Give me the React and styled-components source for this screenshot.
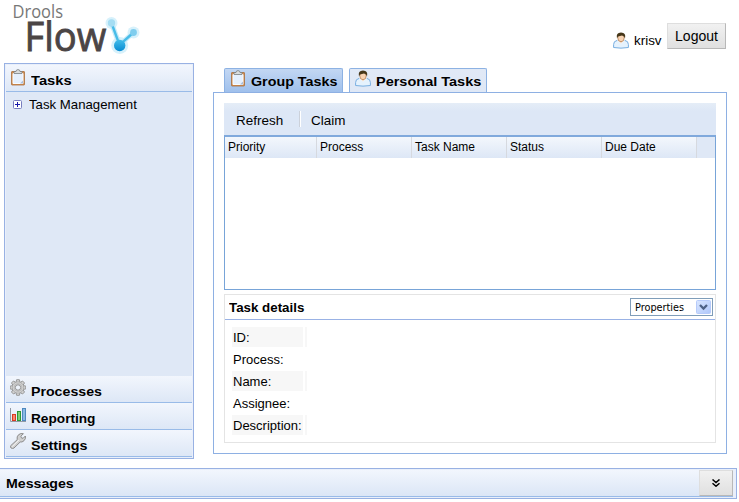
import React from "react";
import styled, { createGlobalStyle } from "styled-components";

const Global = createGlobalStyle`
  * { box-sizing: border-box; }
  body { margin: 0; background: #fff; color: #000; font-family: "Liberation Sans", Arial, sans-serif; overflow: hidden; }
`;

const Page = styled.div`
  width: 739px;
  height: 502px;
  display: flex;
  flex-direction: column;
`;

const Header = styled.header`
  height: 63px;
  flex: none;
  display: flex;
  justify-content: space-between;
  padding-right: 13px;
`;

const UserArea = styled.div`
  display: flex;
  align-items: flex-start;
  padding-top: 23px;
  svg { margin: 9px 5px 0 0; }
`;

const Label = styled.span`
  display: inline-block;
  white-space: nowrap;
  transform-origin: 0 50%;
  font-size: ${(p) => p.$size || 13}px;
  font-weight: ${(p) => (p.$bold ? 700 : 400)};
  transform: scaleX(${(p) => p.$stretch || 1});
  line-height: 16px;
`;

const UserName = styled(Label)`
  margin: 10px 6px 0 0;
`;

const Raised = styled.button`
  padding: 0;
  color: #000;
  font-family: inherit;
  border: 1px solid;
  border-color: #dedede #b8b8b8 #b8b8b8 #dedede;
  background: linear-gradient(#f1f1f1, #e0e0e0);
  width: ${(p) => p.$w}px;
  height: 26px;
  display: flex;
  align-items: center;
  justify-content: center;
`;

const Body = styled.main`
  height: 396px;
  flex: none;
  display: flex;
  align-items: flex-start;
  padding-left: 4px;
`;

const Sidebar = styled.nav`
  width: 190px;
  height: 396px;
  flex: none;
  border: 1px solid #98b1e3;
  padding: 1px;
  background: #dfe8f6;
  box-shadow: inset 0 0 0 1px #e9effa;
  display: flex;
  flex-direction: column;
`;

const StackHeader = styled.div`
  height: 27px;
  flex: none;
  display: flex;
  align-items: flex-start;
  background: linear-gradient(#f2f6fd, #dde7f6);
  border-bottom: 1px solid #99bbe8;
  padding-left: 4px;
  svg { margin: ${(p) => p.$iconTop ?? 4}px 5px 0 0; flex: none; }
  ${Label} { margin-top: 8px; }
`;

const Tree = styled.div`
  flex: 1;
  padding: 5px 0 0 6px;
  display: flex;
  align-items: flex-start;
  svg { margin: 2px 6px 0 0; }
`;

const Content = styled.section`
  width: 514px;
  margin: 5px 0 0 19px;
  display: flex;
  flex-direction: column;
`;

const Tabs = styled.div`
  display: flex;
  gap: 6px;
  height: 24px;
  padding-left: 11px;
`;

const Tab = styled.div`
  width: ${(p) => p.$w}px;
  height: 24px;
  border: 1px solid #8db2e3;
  border-bottom: 0;
  border-radius: 2px 2px 0 0;
  background: ${(p) => (p.$active ? "linear-gradient(#c3d7f3, #9fc0ec)" : "linear-gradient(#e1e9f6, #dfe8f6)")};
  display: flex;
  padding-left: 5px;
  svg { margin: 1px 5px 0 0; flex: none; }
  ${Label} { margin-top: 5px; }
`;

const Panel = styled.div`
  height: 362px;
  border: 1px solid #8eb0e3;
  padding: 10px;
  display: flex;
  flex-direction: column;
`;

const Toolbar = styled.div`
  height: 32px;
  flex: none;
  background: linear-gradient(#e5edf7, #dde7f6 8px);
  display: flex;
  align-items: flex-start;
  padding: 10px 0 0 12px;
`;

const Separator = styled.i`
  width: 2px;
  height: 16px;
  margin: -2px 10px 0 17px;
  border-left: 1px solid #ccd1da;
  border-right: 1px solid #fff;
`;

const Table = styled.div`
  height: 155px;
  flex: none;
  border: 1px solid #78a4d8;
  border-top: 2px solid #80a9dc;
`;

const Columns = styled.div`
  display: grid;
  grid-template-columns: 92px 95px 95px 95px 95px 1fr;
  height: 21px;
  background: #dfe8f6;
`;

const Column = styled.div`
  padding: 2px 0 0 3px;
  background: linear-gradient(#f3f7fc, #dde7f6);
  border-right: 1px solid #d6d9df;
  ${Label} { display: block; }
`;

const Details = styled.div`
  height: 149px;
  margin-top: 4px;
  flex: none;
  border: 1px solid #e4e4e4;
`;

const DetailsHead = styled.div`
  height: 25px;
  border-bottom: 1px solid #99b2e5;
  display: flex;
  justify-content: space-between;
  padding: 3px 2px 0 4px;
  ${Label} { margin-top: 2px; }
`;

const Select = styled.div`
  width: 83px;
  height: 18px;
  border: 1px solid #7f9db9;
  display: flex;
  justify-content: space-between;
  padding: 1px 1px 0 4px;
  ${Label} { margin-top: 0; font-family: "DejaVu Sans", sans-serif; }
  svg { flex: none; }
`;

const Form = styled.div`
  padding: 7px 0 0 7px;
  display: grid;
  grid-auto-rows: 20px;
  row-gap: 2px;
`;

const Field = styled.div`
  display: grid;
  grid-template-columns: 71px 2px;
  column-gap: 2px;
  & > * { background: ${(p) => (p.$shade ? "#f7f7f7" : "transparent")}; }
`;

const FieldName = styled.div`
  padding: 3px 0 0 1px;
  ${Label} { display: block; }
`;

const Messages = styled.footer`
  width: 737px;
  height: 31px;
  margin-top: 9px;
  flex: none;
  border: 1px solid #98b1e3;
  border-left: 0;
  padding: 1px 3px 1px 0;
  background: #e9effa;
`;

const MessageBar = styled.div`
  height: 27px;
  border-bottom: 1px solid #99bbe8;
  background: linear-gradient(#f2f6fd, #dbe6f6);
  display: flex;
  justify-content: space-between;
  padding-left: 5.500px;
  ${Label} { margin-top: 6px; }
`;

const Logo = () => (
  <svg width="145" height="63" viewBox="0 0 145 63" overflow="visible">
    <defs>
      <linearGradient id="node" x2="0" y2="1"><stop stopColor="#42bdea" /><stop offset="1" stopColor="#078bd2" /></linearGradient>
    </defs>
    <text x="12.500" y="17.500" fontFamily="Open Sans, sans-serif" fontSize="17.500" fill="#777" textLength="50.500" lengthAdjust="spacingAndGlyphs">Drools</text>
    <text x="24.500" y="50.500" fontFamily="Open Sans, sans-serif" fontSize="40.500" fill="#4b4545" stroke="#4b4545" strokeWidth=".9" textLength="81.800" lengthAdjust="spacingAndGlyphs">Flow</text>
    <g fill="#d7f1fb"><circle cx="111.500" cy="23" r="6" /><circle cx="133.500" cy="32.500" r="6" /><circle cx="119.700" cy="45.500" r="8.500" /></g>
    <path d="M111.500 23L119.500 45L133.500 32.500" fill="none" stroke="#c7ebf9" strokeWidth="5" />
    <path d="M111.500 23L119.500 45L133.500 32.500" fill="none" stroke="#48bce8" strokeWidth="2.400" />
    <circle cx="111.500" cy="23" r="3.700" fill="#a5ddf3" /><circle cx="133.500" cy="32.500" r="3.400" fill="#7fcdee" />
    <circle cx="119.700" cy="45.500" r="5.700" fill="url(#node)" />
  </svg>
);

const UserIcon = () => (
  <svg width="16" height="17" viewBox="0 0 16 17">
    <path d="M.6 15.500V12.500Q.6 9 4 8.500L5 7.500H11L12 8.500Q15.400 9 15.400 12.500V15.500Q8 16.800 .6 15.500Z" fill="#e5f2fd" stroke="#78aee0" />
    <path d="M4.500 7.500L8 11.500L11.500 7.500Z" fill="#edc09b" stroke="#fff" strokeWidth=".6" />
    <ellipse cx="8" cy="5.700" rx="3.200" ry="4" fill="#f7d3b3" stroke="#a76c3b" strokeWidth=".6" />
    <path d="M4 6.500Q2.700.7 8 .6Q13.300.7 12 6.500L11 4.500L9 3.500L7 4L5 4.500Z" fill="#463719" />
  </svg>
);

const ClipboardIcon = () => (
  <svg width="16" height="17" viewBox="0 0 16 17">
    <rect x="1.500" y="2.500" width="13" height="13.500" rx=".5" fill="#d38e50" stroke="#aa703e" strokeWidth=".8" />
    <path d="M3 4.500H13V14.500H3Z" fill="#e5f0fe" stroke="#f8fbff" />
    <path d="M10 14.500L13 11.500V14.500Z" fill="#a9bfdc" />
    <path d="M4 4.500V2.500H6Q6 .6 8 .6T10 2.500H12V4.500Z" fill="#d9dcdd" stroke="#777f83" strokeWidth=".8" />
  </svg>
);

const GEAR_ANGLES = [0, 45, 90, 135, 180, 225, 270, 315];

const GearIcon = () => (
  <svg width="16" height="17" viewBox="0 0 16 17">
    {GEAR_ANGLES.map((a) => (
      <path key={a} d="M5.900 4L6.600 .7H9.400L10.100 4Z" transform={`rotate(${a} 8 8.500)`} fill="#d4d4d4" stroke="#919191" strokeWidth=".9" />
    ))}
    <circle cx="8" cy="8.500" r="5.700" fill="#d4d4d4" stroke="#999" strokeWidth=".6" />
    <circle cx="8" cy="8.500" r="4" fill="none" stroke="#b5b5b5" strokeWidth=".8" />
    <circle cx="8" cy="8.500" r="2.700" fill="#eef3fb" stroke="#8d8d8d" strokeWidth=".9" />
  </svg>
);

const ChartIcon = () => (
  <svg width="16" height="16" viewBox="0 0 16 16">
    <defs>
      <linearGradient id="barRed"><stop stopColor="#e93b22" /><stop offset=".5" stopColor="#ffad91" /><stop offset="1" stopColor="#ed5034" /></linearGradient>
      <linearGradient id="barGreen"><stop stopColor="#259b30" /><stop offset=".5" stopColor="#a5e795" /><stop offset="1" stopColor="#37a63e" /></linearGradient>
      <linearGradient id="barBlue"><stop stopColor="#4686c8" /><stop offset=".5" stopColor="#a8d1f3" /><stop offset="1" stopColor="#4d8ac2" /></linearGradient>
    </defs>
    <path d="M.5 1V14.500H16" fill="none" stroke="#929aa5" />
    <rect x="2.500" y="7.500" width="3" height="6" fill="url(#barRed)" stroke="#d93b23" />
    <rect x="7.500" y="4.500" width="3" height="9" fill="url(#barGreen)" stroke="#2a9734" />
    <rect x="12.500" y="1.500" width="3" height="12" fill="url(#barBlue)" stroke="#4e88be" />
  </svg>
);

const WrenchIcon = () => (
  <svg width="16" height="16" viewBox="0 0 16 16">
    <path d="M.7 12.700L7.200 6.700Q6.500 3.500 8.600 1.700T13.400 .7L10.900 3.200L11.400 4.900L13.100 5.300L15.400 3Q16 5.900 14 7.700T10.200 9L4 15Q2.300 16.200 1.100 15T.7 12.700Z" fill="#d1d1d1" stroke="#8c8c8c" />
    <path d="M2.300 13.500L9 7" stroke="#f2f2f2" />
  </svg>
);

const PlusIcon = () => (
  <svg width="11" height="12" viewBox="0 0 11 12">
    <rect x="1.500" y="1.500" width="8" height="8" rx="1" fill="#fff" stroke="#777dbf" />
    <path d="M3 5.500H8M5.500 3V8" stroke="#1717aa" />
  </svg>
);

const SelectArrow = () => (
  <svg width="15" height="14" viewBox="0 0 15 14">
    <defs><linearGradient id="arrowFace" x2="1" y2="1"><stop stopColor="#d9e6ff" /><stop offset="1" stopColor="#afc7fa" /></linearGradient></defs>
    <rect x=".5" y=".5" width="14" height="13" rx="1" fill="url(#arrowFace)" stroke="#b7cbfa" />
    <path d="M4 5L7.500 8.500L11 5" fill="none" stroke="#4d6185" strokeWidth="2.300" />
  </svg>
);

const Chevrons = () => (
  <svg width="8" height="8" viewBox="0 0 8 8">
    <path d="M.5 .5L4 3.500L7.500 .5M.5 4.200L4 7.200L7.500 4.200" fill="none" stroke="#000" strokeWidth="1.500" />
  </svg>
);

const sections = [
  { name: "Processes", Icon: GearIcon, top: 3, stretch: 1.09 },
  { name: "Reporting", Icon: ChartIcon, top: 4, stretch: 1.05 },
  { name: "Settings", Icon: WrenchIcon, top: 3, stretch: 1.1 },
];

const columns = ["Priority", "Process", "Task Name", "Status", "Due Date"];
const fields = ["ID:", "Process:", "Name:", "Assignee:", "Description:"];

export default function App() {
  return (
    <>
      <Global />
      <Page>
        <Header>
          <Logo />
          <UserArea>
            <UserIcon />
            <UserName $stretch={1.03}>krisv</UserName>
            <Raised $w={59}><Label $size={14}>Logout</Label></Raised>
          </UserArea>
        </Header>
        <Body>
          <Sidebar>
            <StackHeader><ClipboardIcon /><Label $bold $stretch={1.13}>Tasks</Label></StackHeader>
            <Tree><PlusIcon /><Label $stretch={1.015}>Task Management</Label></Tree>
            {sections.map(({ name, Icon, top, stretch }) => (
              <StackHeader key={name} $iconTop={top}><Icon /><Label $bold $stretch={stretch}>{name}</Label></StackHeader>
            ))}
          </Sidebar>
          <Content>
            <Tabs>
              <Tab $w={119} $active><ClipboardIcon /><Label $bold $stretch={1.1}>Group Tasks</Label></Tab>
              <Tab $w={138}><UserIcon /><Label $bold $stretch={1.115}>Personal Tasks</Label></Tab>
            </Tabs>
            <Panel>
              <Toolbar>
                <Label $stretch={1.035}>Refresh</Label>
                <Separator />
                <Label $stretch={1.035}>Claim</Label>
              </Toolbar>
              <Table>
                <Columns>{columns.map((name) => <Column key={name}><Label $size={12}>{name}</Label></Column>)}</Columns>
              </Table>
              <Details>
                <DetailsHead>
                  <Label $bold $stretch={1.025}>Task details</Label>
                  <Select><Label $size={10} $stretch={0.97}>Properties</Label><SelectArrow /></Select>
                </DetailsHead>
                <Form>
                  {fields.map((name, i) => (
                    <Field key={name} $shade={i % 2 === 0}><FieldName><Label>{name}</Label></FieldName><span /></Field>
                  ))}
                </Form>
              </Details>
            </Panel>
          </Content>
        </Body>
        <Messages>
          <MessageBar>
            <Label $bold $stretch={1.09}>Messages</Label>
            <Raised $w={34}><Chevrons /></Raised>
          </MessageBar>
        </Messages>
      </Page>
    </>
  );
}
